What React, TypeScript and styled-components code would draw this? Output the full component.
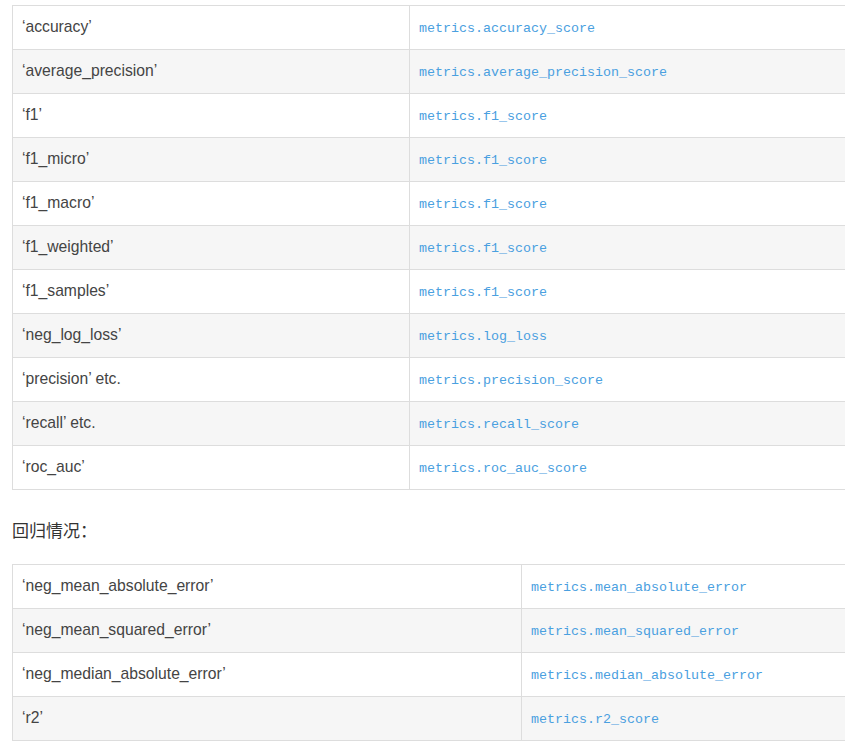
import React from "react";
import styled, { createGlobalStyle } from "styled-components";

const Global = createGlobalStyle`
  html, body { margin: 0; padding: 0; background: #fff; overflow: hidden; }
  body { font-family: "Liberation Sans", Arial, "Noto Sans CJK SC", sans-serif; color: #333; }
`;

const Page = styled.div`
  padding: 5px 0 0 12px;
  width: 900px;
`;

const Table = styled.table<{ $left: number }>`
  border-collapse: collapse;
  width: 860px;
  table-layout: fixed;
  col:first-child { width: ${(p) => p.$left}px; }
`;

const Row = styled.tr`
  height: 44px;
  &:nth-child(even) { background: #f6f6f6; }
`;

const NameCell = styled.td`
  border: 1px solid #dddddd;
  padding: 0 9px 1px;
  font-size: 15.7px;
  color: #444;
  vertical-align: middle;
  line-height: 20px;
`;

const CodeCell = styled.td`
  border: 1px solid #dddddd;
  padding: 0 9px 2px;
  vertical-align: middle;
`;

const Code = styled.code`
  font-family: "Liberation Mono", "Courier New", monospace;
  font-size: 13.33px;
  color: #4aa0e0;
`;

const Heading = styled.p`
  margin: 27px 0 21px;
  font-size: 17px;
  line-height: 26px;
  color: #333;
  font-family: "Noto Sans CJK SC", sans-serif;
`;

const cls: [string, string][] = [
  ["‘accuracy’", "metrics.accuracy_score"],
  ["‘average_precision’", "metrics.average_precision_score"],
  ["‘f1’", "metrics.f1_score"],
  ["‘f1_micro’", "metrics.f1_score"],
  ["‘f1_macro’", "metrics.f1_score"],
  ["‘f1_weighted’", "metrics.f1_score"],
  ["‘f1_samples’", "metrics.f1_score"],
  ["‘neg_log_loss’", "metrics.log_loss"],
  ["‘precision’ etc.", "metrics.precision_score"],
  ["‘recall’ etc.", "metrics.recall_score"],
  ["‘roc_auc’", "metrics.roc_auc_score"],
];

const reg: [string, string][] = [
  ["‘neg_mean_absolute_error’", "metrics.mean_absolute_error"],
  ["‘neg_mean_squared_error’", "metrics.mean_squared_error"],
  ["‘neg_median_absolute_error’", "metrics.median_absolute_error"],
  ["‘r2’", "metrics.r2_score"],
];

function ScoreTable({ rows, left }: { rows: [string, string][]; left: number }) {
  return (
    <Table $left={left}>
      <colgroup>
        <col />
        <col />
      </colgroup>
      <tbody>
        {rows.map(([a, b], i) => (
          <Row key={i}>
            <NameCell>{a}</NameCell>
            <CodeCell>
              <Code>{b}</Code>
            </CodeCell>
          </Row>
        ))}
      </tbody>
    </Table>
  );
}

export default function App() {
  return (
    <>
      <Global />
      <Page>
        <ScoreTable rows={cls} left={397} />
        <Heading>回归情况：</Heading>
        <ScoreTable rows={reg} left={509} />
      </Page>
    </>
  );
}
